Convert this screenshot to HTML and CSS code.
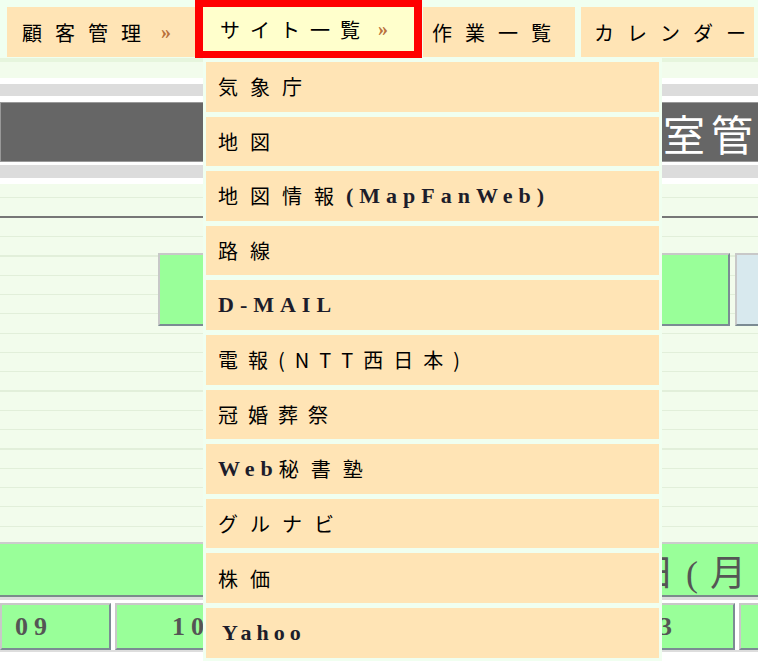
FILE: index.html
```html
<!DOCTYPE html>
<html lang="ja">
<head>
  <meta charset="UTF-8" />
  <meta name="viewport" content="width=device-width, initial-scale=1.0"/>
  <title>サイト一覧</title>
  <link rel="stylesheet" href="styles.css">
</head>
<body>
  <div class="page">
    <div class="nav">
      <div class="tab tab-customer">顧客管理<span class="raquo">»</span></div>
      <div class="tab tab-sites current">サイト一覧<span class="raquo">»</span>
        <ul class="submenu">
          <li>気象庁</li>
          <li>地図</li>
          <li>地図情報<span class="en">(MapFanWeb)</span></li>
          <li>路線</li>
          <li><span class="en">D-MAIL</span></li>
          <li class="tight">電報(NTT西日本)</li>
          <li class="tight">冠婚葬祭</li>
          <li><span class="en">Web</span>秘書塾</li>
          <li>グルナビ</li>
          <li>株価</li>
          <li><span class="en en-yahoo">Yahoo</span></li>
        </ul>
      </div>
      <div class="tab tab-work">作業一覧</div>
      <div class="tab tab-calendar">カレンダー</div>
    </div>

    <div class="content">
      <div class="band-top"></div>
      <div class="band-pale"></div>
      <div class="gap"></div>
      <div class="gray-bar"></div>
      <div class="gap"></div>
      <div class="title-bar">会議室管理システム</div>
      <div class="gap gap-thin"></div>
      <div class="gray-bar gray-bar-low"></div>
      <div class="gap"></div>
      <div class="rows">
        <div class="box box-green"></div>
        <div class="box box-blue"></div>
      </div>
      <div class="date-bar">2009年1月5日(月)</div>
      <div class="sep"></div>
      <div class="hours">
        <div class="hour hour-first">09</div>
        <div class="hour">10</div>
        <div class="hour">11</div>
        <div class="hour">12</div>
        <div class="hour">13</div>
        <div class="hour">14</div>
      </div>
      <div class="sep-bottom"></div>
    </div>
  </div>
</body>
</html>
```

FILE: styles.css
```css
body {
  margin: 0;
  background: #ffffff;
  font-family: "Noto Sans CJK JP", sans-serif;
  color: #000;
}

.page {
  position: relative;
  width: 758px;
  height: 664px;
  overflow: hidden;
}

/* top navigation */
.nav {
  display: flex;
  align-items: flex-start;
  height: 58px;
  background: #f0fff0;
}

.tab {
  box-sizing: border-box;
  display: flex;
  flex-shrink: 0;
  align-items: center;
  height: 50px;
  margin-top: 7px;
  background: #ffe4b5;
  font-size: 20px;
  letter-spacing: 13px;
  white-space: nowrap;
}

.tab-customer {
  width: 188px;
  margin-left: 7px;
  padding-left: 15px;
}

.tab.current {
  position: relative;
  width: 227px;
  height: 58px;
  margin-top: 0;
  padding-left: 17px;
  border: 7px solid #ff0000;
  border-left-width: 8px;
  border-right-width: 8px;
  background: #ffffcc;
  letter-spacing: 10px;
}

.tab-work {
  width: 152px;
  margin-left: 1px;
  padding-left: 9px;
}

.tab-calendar {
  width: 173px;
  margin-left: 6px;
  padding-left: 13px;
}

.raquo {
  margin-left: 7px;
  font-family: "Liberation Serif", serif;
  font-size: 20px;
  font-weight: bold;
  letter-spacing: 0;
  color: #b8703a;
}

.current .raquo {
  margin-left: 8px;
}

/* dropdown */
.submenu {
  position: absolute;
  left: 0;
  top: 51px;
  box-sizing: border-box;
  width: 459px;
  margin: 0;
  padding: 4px 3px 3px;
  list-style: none;
  background: #f0fff0;
  z-index: 10;
}

.submenu li {
  display: flex;
  align-items: center;
  height: 49.6px;
  margin-bottom: 5px;
  padding-left: 12px;
  background: #ffe4b5;
  font-size: 20px;
  letter-spacing: 12px;
}

.submenu li.tight {
  letter-spacing: 10px;
}

.submenu li:last-child {
  margin-bottom: 0;
}

.en {
  font-family: "Liberation Serif", serif;
  font-weight: bold;
  font-size: 22px;
  letter-spacing: 6px;
  color: #1d1d2b;
}

.en-yahoo {
  letter-spacing: 5px;
  margin-left: 4px;
}

/* page behind the menu */
.content {
  width: 1000px;
}

.band-top {
  height: 4px;
  background: #e6f5dd;
}

.band-pale {
  height: 16px;
  background: #f2fcec;
}

.gap {
  height: 6px;
  background: #fff;
}

.gap-thin {
  height: 3px;
}

.gray-bar {
  height: 12px;
  background: #dcdcdc;
}

.gray-bar-low {
  height: 13px;
}

.title-bar {
  box-sizing: border-box;
  display: flex;
  align-items: center;
  height: 60px;
  padding-left: 566px;
  border: 1px solid #999;
  background: #666;
  color: #fff;
  font-size: 42px;
  letter-spacing: 6px;
  white-space: nowrap;
  overflow: hidden;
}

.rows {
  box-sizing: border-box;
  display: flex;
  gap: 5px;
  height: 358px;
  padding: 69px 0 0 158px;
  background:
    linear-gradient(#777, #777) 0 32px / 100% 2px no-repeat,
    linear-gradient(#e2efda, #e2efda) 0 13px / 100% 1px no-repeat,
    repeating-linear-gradient(#f2fcec 0 18px, #e2efda 18px 19.3px) 0 34px / 100% 324px no-repeat,
    #f2fcec;
}

.box {
  box-sizing: border-box;
  flex-shrink: 0;
  height: 73px;
  border: 2px solid #c8c8c8;
  border-right-color: #7b8b93;
  border-bottom-color: #7b8b93;
}

.box-green {
  width: 572px;
  background: #99ff99;
}

.box-blue {
  width: 200px;
  background: #d8e9ee;
}

.date-bar {
  box-sizing: border-box;
  display: flex;
  align-items: center;
  height: 55px;
  padding-left: 362px;
  border-top: 2px solid #cccccc;
  border-bottom: 2px solid #7b8b8b;
  background: #99ff99;
  color: #555;
  font-family: "Liberation Serif", "Noto Sans CJK JP", serif;
  font-size: 36px;
  letter-spacing: 12px;
  white-space: nowrap;
}

.sep {
  height: 3px;
  border-bottom: 3px solid #fff;
  background: #dddddd;
}

.hours {
  display: flex;
  gap: 4px;
}

.hour {
  box-sizing: border-box;
  display: flex;
  flex-shrink: 0;
  align-items: center;
  justify-content: center;
  width: 152px;
  height: 47px;
  border: 2px solid #c8c8c8;
  border-right-color: #7b8b93;
  border-bottom-color: #7b8b93;
  background: #99ff99;
  color: #555;
  font-family: "Liberation Serif", serif;
  font-weight: bold;
  font-size: 26px;
  letter-spacing: 6px;
}

.hour-first {
  width: 111px;
  justify-content: flex-start;
  padding-left: 13px;
}

.sep-bottom {
  height: 2px;
  background: #dddddd;
}
```
